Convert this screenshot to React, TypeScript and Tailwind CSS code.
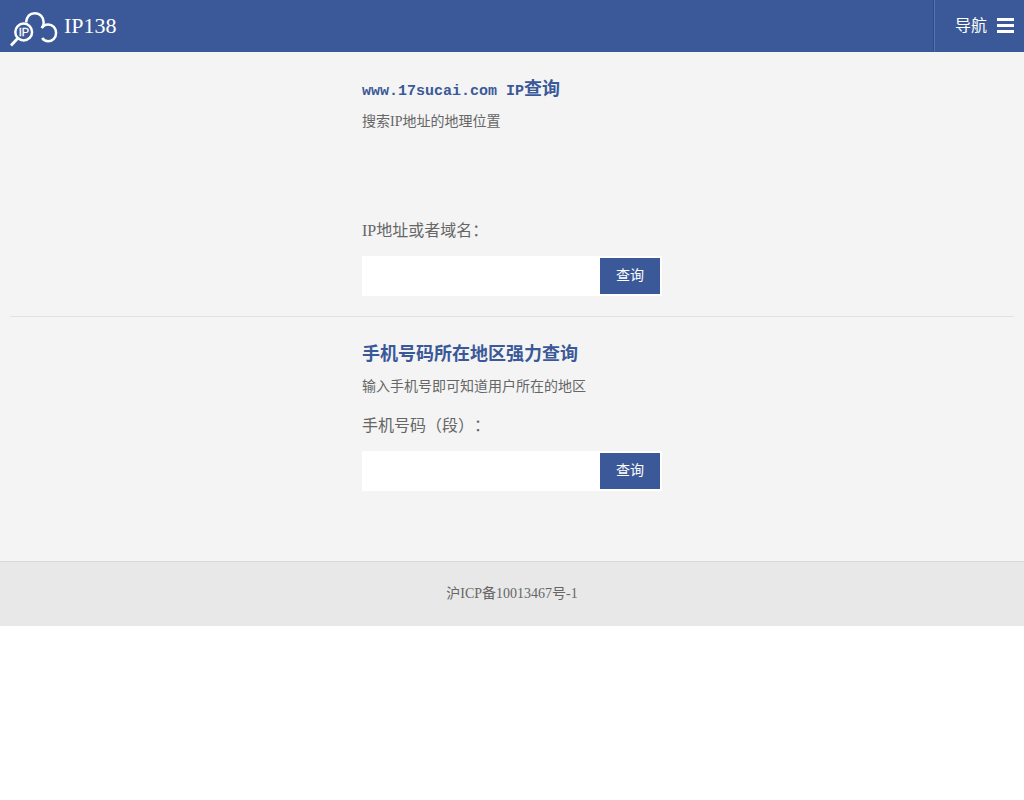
import type { ReactNode } from "react";

interface QueryPanelProps {
  id: string;
  title: ReactNode;
  intro: string;
  label: string;
  children?: ReactNode;
}

function Logo() {
  return (
    <svg
      width="50"
      height="38"
      viewBox="0 0 50 38"
      fill="none"
      stroke="#fff"
      strokeWidth="2.5"
      aria-hidden="true">
      <circle cx="13.7" cy="23" r="8.4" />
      <path d="M8 29 1 36.500" strokeWidth="2.8" />
      <path d="M16 13.500C16.800 7.800 20 4.300 24.700 4.300c5.300 0 9 4.100 9 9.200 0 2-.6 3.700-1.700 5.200" />
      <path d="M31.600 19c1.500-2.300 3.900-3.600 6.600-3.600 4.500 0 7.900 3.600 7.900 8.400s-3.400 8.400-7.900 8.400c-2.500 0-4.600-1.100-6-3.200" />
      <text
        x="14"
        y="27"
        textAnchor="middle"
        fontSize="11"
        fill="#fff"
        stroke="#fff"
        strokeWidth="0.3"
        className="font-['Liberation_Sans',sans-serif]">
        IP
      </text>
    </svg>
  );
}

function Header() {
  return (
    <header className="flex h-[52px] items-stretch justify-between bg-[#3b5998] text-white">
      <a href="#" className="flex items-center pl-2.5">
        <span className="pt-1">
          <Logo />
        </span>
        <span className="pl-1 text-[22px] leading-6">IP138</span>
      </a>
      <button
        type="button"
        className="flex items-center gap-2.5 border-l border-[#5571a8] pr-2.5 pl-5 text-base shadow-[-1px_0_0_#314d88]">
        导航
        <svg width="17" height="16" viewBox="0 0 17 16" fill="currentColor" aria-hidden="true">
          <path d="M0 0h17v3H0zM0 6h17v3H0zM0 12h17v3H0z" />
        </svg>
      </button>
    </header>
  );
}

function QueryPanel({ id, title, intro, label, children }: QueryPanelProps) {
  return (
    <section className="pt-[22px] pb-5">
      <div className="mx-auto max-w-[300px]">
        <h2 className="h-[30px] text-lg leading-[30px] font-bold text-[#3b5998]">{title}</h2>
        <p className="mt-1.5 text-sm leading-6">{intro}</p>
        {children}
        <form onSubmit={(e) => e.preventDefault()}>
          <label htmlFor={id} className="mt-[15px] block text-base leading-6">
            {label}
          </label>
          <div className="mt-[13px] flex h-10 bg-white p-0.5">
            <input
              id={id}
              type="text"
              className="min-w-0 flex-1 bg-transparent px-2 text-sm outline-none"
            />
            <button type="submit" className="w-[60px] bg-[#3b5998] text-sm text-white">
              查询
            </button>
          </div>
        </form>
      </div>
    </section>
  );
}

export default function App() {
  return (
    <div className="font-['Liberation_Serif','Noto_Sans_CJK_SC',serif] text-[#666] [text-spacing-trim:space-all]">
      <Header />
      <main className="bg-[#f4f4f4] px-2.5 pb-[50px]">
        <QueryPanel
          id="ip"
          title={
            <>
              <span className="font-['Liberation_Mono',monospace] text-[15px]">
                www.17sucai.com IP
              </span>
              查询
            </>
          }
          intro="搜索IP地址的地理位置"
          label="IP地址或者域名：">
          {/* banner slot */}
          <div className="h-[70px]" />
        </QueryPanel>
        <hr className="border-[#e2e2e2]" />
        <QueryPanel
          id="mobile"
          title="手机号码所在地区强力查询"
          intro="输入手机号即可知道用户所在的地区"
          label="手机号码（段）："
        />
      </main>
      <footer className="border-t border-[#d9d9d9] bg-[#e8e8e8] py-5 text-center text-sm leading-6">
        沪ICP备10013467号-1
      </footer>
    </div>
  );
}
